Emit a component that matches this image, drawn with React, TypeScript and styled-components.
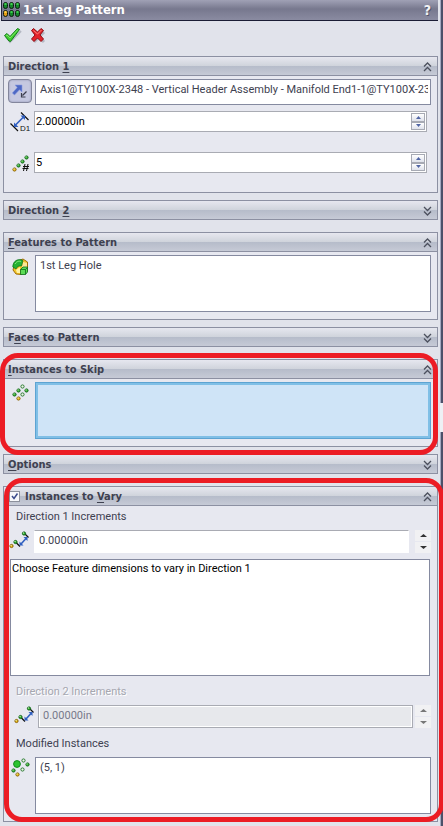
import React, { useState } from "react";
import type { ReactNode } from "react";
import styled, { createGlobalStyle, css } from "styled-components";

const GlobalStyle = createGlobalStyle`
  *, *::before, *::after { box-sizing: border-box; }
  body {
    margin: 0;
    background: #e1e3eb;
    color: #3e4150;
    font-family: Roboto, "DejaVu Sans Condensed", sans-serif;
    font-size: 11px;
    line-height: 14px;
  }
  button, input { font: inherit; color: inherit; margin: 0; }
  button { cursor: pointer; }
`;

const headingFont = css`
  font-family: "DejaVu Sans Condensed", "DejaVu Sans", Tahoma, sans-serif;
  font-weight: bold;
`;

/* ---------- layout ---------- */

const Window = styled.div`
  display: flex;
  min-height: 100vh;
  overflow: hidden;
`;

const Panel = styled.main`
  flex: 1;
  min-width: 0;
  > :last-child { margin-bottom: 4px; }
`;

const Splitter = styled.div`
  flex: none;
  width: 4px;
  display: flex;
  flex-direction: column;
  border-left: 1px solid #e1e3eb;
`;

const SplitterBar = styled.div<{ $grow: number }>`
  flex: ${(p) => p.$grow} 1 0;
  border-left: 1px solid #a4a9c0;
  background: #4c5069;
`;

const SplitterGrip = styled.div`
  height: 29px;
  background: #eef0f5;
`;

const TitleBar = styled.header`
  display: flex;
  align-items: center;
  height: 21px;
  margin: 0 1px;
  padding: 0 7px 0 1px;
  border-left: 1px solid #23263c;
  border-bottom: 1px solid #1b1d35;
  background: linear-gradient(#a0a1b5 0%, #77788e 45%, #8a8ba1 100%);
`;

const Title = styled.h1`
  flex: 1;
  margin: 0 0 0 2px;
  ${headingFont}
  font-size: 13px;
  line-height: 16px;
  color: #fff;
`;

const HelpButton = styled.button`
  padding: 0;
  border: 0;
  background: none;
  color: #f2f2f5;
  ${headingFont}
  font-size: 14px;
  line-height: 16px;
  text-shadow: 1px 1px 0 #55566b;
`;

const ActionBar = styled.div`
  display: flex;
  gap: 9px;
  height: 35px;
  padding: 6px 4px 0;
`;

const ActionButton = styled.button`
  width: 18px;
  height: 18px;
  padding: 0;
  border: 0;
  background: none;
`;

const Section = styled.section<{ $open: boolean }>`
  position: relative;
  margin: 0 1px ${(p) => (p.$open ? 7 : 12)}px 3px;
  border: 1px solid #8c90a2;
  background: #e7e8f0;
`;

const SectionHeader = styled.div<{ $open: boolean }>`
  display: flex;
  align-items: center;
  height: ${(p) => (p.$open ? 19 : 18)}px;
  border-bottom: ${(p) => (p.$open ? "1px solid #8c90a2" : "0")};
  background: linear-gradient(#e6e7ef 0%, #d0d4dc 48%, #b6bcca 52%, #c6cad6 100%);
`;

const SectionToggle = styled.button`
  flex: 1;
  display: flex;
  align-items: center;
  justify-content: space-between;
  height: 18px;
  padding: 2px 5px 0 4px;
  border: 0;
  background: none;
  ${headingFont}
  text-align: left;
`;

const Mnemonic = styled.u`
  text-underline-offset: 2px;
`;

const CheckBox = styled.span`
  display: grid;
  flex: none;
  margin: 0 1px 0 5px;
  > * { grid-area: 1 / 1; }
  > svg { display: none; place-self: center; pointer-events: none; }
  > input:checked + svg { display: block; }
`;

const HeaderCheck = styled.input`
  appearance: none;
  width: 11px;
  height: 11px;
  border: 1px solid #8c909c;
  background: #f7f8fb;
`;

const SectionBody = styled.div<{ $bottom: number }>`
  display: flex;
  flex-direction: column;
  padding: 3px 6px ${(p) => p.$bottom}px 0;
`;

const Row = styled.div<{ $icon?: number; $end?: number; $before?: number; $after?: number }>`
  display: grid;
  grid-template-columns: ${(p) => p.$icon ?? 31}px minmax(0, 1fr);
  align-items: start;
  margin: ${(p) => p.$before ?? 0}px ${(p) => p.$end ?? 0}px ${(p) => p.$after ?? 0}px 0;
`;

const IconCell = styled.span<{ $left?: number; $top?: number }>`
  display: flex;
  padding: ${(p) => p.$top ?? 3}px 0 0 ${(p) => p.$left ?? 8}px;
`;

/* ---------- fields ---------- */

const DirectionButton = styled.button`
  display: grid;
  place-items: center;
  width: 24px;
  height: 24px;
  margin-left: 4px;
  padding: 0;
  border: 1px solid #83869c;
  border-radius: 4px;
  background: #c5c8e0;
  box-shadow: inset 0 0 2px #8a8eac;
`;

const ListBox = styled.ul<{ $height: number; $active?: boolean; $tight?: boolean }>`
  height: ${(p) => p.$height}px;
  margin: 0;
  padding: ${(p) => (p.$tight ? "1px 1px 0" : "2px 2px 0 4px")};
  border: 1px solid #858aa0;
  background: #fff;
  list-style: none;
  overflow: hidden;
  white-space: nowrap;
  ${(p) => p.$tight && "color: #000;"}
  ${(p) =>
    p.$active &&
    css`
      border-color: #5da3d2;
      background: #cfe4f7;
      box-shadow: inset 0 0 0 2px #80bfe6;
    `}
`;

const ListItem = styled.li`
  overflow: hidden;
  line-height: 15px;
`;

const NumberFrame = styled.div`
  display: flex;
  height: 21px;
  padding: 1px;
  border: 1px solid #a9abb3;
  background: #fff;
  color: #000;
`;

const BareInput = styled.input`
  flex: 1;
  min-width: 0;
  padding: 0;
  border: 0;
  background: none;
  outline: 0;
`;

const Spinner = styled.span`
  display: grid;
  grid-template-rows: 1fr 1fr;
  width: 14px;
`;

const SpinButton = styled.button`
  display: grid;
  place-items: center;
  min-height: 0;
  padding: 0;
  border: 1px solid #a7aab4;
  background: linear-gradient(#fff, #dfe2ec);
  color: #5065a5;
`;

const VaryRow = styled.div<{ $icon: number; $after: number; $gap: number }>`
  display: grid;
  grid-template-columns: ${(p) => p.$icon}px minmax(0, 1fr) 16px;
  margin: 6px 0 ${(p) => p.$after}px;
  > input { margin-right: ${(p) => p.$gap}px; }
`;

const VaryInput = styled.input`
  min-width: 0;
  height: 23px;
  padding: 0 4px 2px;
  border: 1px solid #fff;
  border-top-color: #a9abb3;
  background: #fff;
  outline: 0;
  &:disabled {
    border: 1px solid #a9abb3;
    box-shadow: inset 0 0 0 1px #fff;
    background: #e7e8ec;
    color: #77798a;
  }
`;

const FlatSpinner = styled.span<{ $dim?: boolean }>`
  display: grid;
  grid-template-rows: 1fr 1fr;
  gap: 1px;
  height: 23px;
  color: ${(p) => (p.$dim ? "#777" : "#333")};
`;

const FlatSpin = styled.button`
  display: grid;
  place-items: center;
  min-height: 0;
  padding: 0;
  border: 0;
  background: #f1f1f3;
`;

const FieldLabel = styled.label<{ $disabled?: boolean }>`
  display: block;
  padding: 1px 0 0 12px;
  ${(p) => p.$disabled && "color: #a6a7b0; text-shadow: 1px 1px 0 #fff;"}
`;

const IndentedList = styled.div`
  margin: 0 1px 8px 0;
  padding-left: 6px;
`;

const Outline = styled.div<{ $inset: string }>`
  position: absolute;
  inset: ${(p) => p.$inset};
  z-index: 2;
  border: 5px solid #ec1c24;
  border-radius: 18px;
  pointer-events: none;
`;

/* ---------- icons ---------- */

const Dot = ({ x, y, kind = "green" }: { x: number; y: number; kind?: "green" | "gold" | "hollow" }) => {
  const fill = { green: "#35b52f", gold: "#f2c21c", hollow: "#eef5ea" }[kind];
  const edge = { green: "#12661a", gold: "#8a6206", hollow: "#2b7a30" }[kind];
  return (
    <g>
      <circle cx={x} cy={y} r={1.6} fill={fill} stroke={edge} />
      {kind !== "hollow" && <rect x={x - 1} y={y - 1} width={1} height={1} fill="#d9f7c9" />}
    </g>
  );
};

const PatternIcon = () => (
  <svg width="18" height="17" viewBox="0 0 18 17" aria-hidden="true">
    {[0, 6, 12].map((x) =>
      [0, 8].map((y) => {
        const gold = x === 0 && y === 8;
        return (
          <g key={`${x}-${y}`}>
            <rect x={x + 0.5} y={y + 0.5} width="4" height="6" rx="2" fill={gold ? "#e39a14" : "#14842a"} stroke="#0b1c0e" />
            <rect x={x + 1.5} y={y + 1} width="2" height="2" fill={gold ? "#ffd24a" : "#3ccf4c"} />
          </g>
        );
      }),
    )}
  </svg>
);

const CheckIcon = () => (
  <svg width="18" height="18" viewBox="0 0 18 18" aria-hidden="true">
    <path d="M2 10 L6 15 L17 4" fill="none" stroke="#b4b8c3" strokeWidth="2" />
    <path d="M0.5 8.5 L3 6.5 L6 9.5 L13.5 1.5 L15.5 2.5 L6.5 14.5 L5 14 Z" fill="#3fd02f" stroke="#117a18" />
    <path d="M2 8.5 L3 8 L6 11 L13.5 3" fill="none" stroke="#7fe468" />
  </svg>
);

const CrossIcon = () => (
  <svg width="18" height="18" viewBox="0 0 18 18" aria-hidden="true">
    <path d="M3 5 L13 15 M13 5 L3 15" stroke="#b4b8c3" strokeWidth="3" />
    <path
      d="M0.5 3.5 L2.5 1.5 L6.5 5 L10 1.5 L12.5 3.5 L9 8 L12.5 12 L10 14.5 L6.5 11 L3 14.5 L0.5 12 L4 8 Z"
      fill="#e3222a"
      stroke="#8f0d14"
    />
    <path d="M2.5 3.5 L6.5 7 L10.5 3" fill="none" stroke="#ff8078" />
  </svg>
);

const ReverseIcon = () => (
  <svg width="18" height="18" viewBox="0 0 18 18" aria-hidden="true">
    <path d="M4 3 H11 V10 L8.5 7.8 L3.5 13 L1.3 11 L6.2 5.5 Z" fill="#4d68c4" stroke="#8c9ce0" strokeWidth="0.6" />
    <path d="M15.5 9.5 L11.5 13.5 M10.5 11 V15 H14.5" fill="none" stroke="#3a3d4c" strokeWidth="1.2" />
  </svg>
);

const SpacingIcon = () => (
  <svg width="21" height="20" viewBox="0 0 21 20" aria-hidden="true">
    <path d="M0.5 11.5 L8 19 M11 0.5 L18.5 8" stroke="#111" strokeWidth="1.2" />
    <path d="M5 13.5 L14 4.5" stroke="#2f5ec0" strokeWidth="1.6" />
    <path d="M4 15 V10.5 L8.5 15 Z M15 3.5 H10.5 L15 8 Z" fill="#2f5ec0" />
    <text x="10" y="19" fontSize="8" fontFamily="Liberation Sans, sans-serif" fill="#111">
      D1
    </text>
  </svg>
);

const CountIcon = () => (
  <svg width="18" height="18" viewBox="0 0 18 18" aria-hidden="true">
    <Dot x={2.5} y={15.5} kind="gold" />
    <Dot x={6.5} y={11.5} />
    <Dot x={10.5} y={7.5} />
    <Dot x={14.5} y={3.5} />
    <path d="M13 10 L11.5 17 M16 10 L14.5 17 M11 12.5 H17 M10.5 14.5 H16.5" stroke="#111" />
  </svg>
);

const FeatureIcon = () => (
  <svg width="17" height="18" viewBox="0 0 17 18" aria-hidden="true">
    <path d="M3 4 L11 1 L15.5 4 V13 L9 16.5 L4 16 L1 12 Z" fill="#f4c628" stroke="#a06c08" />
    <path d="M11 4 L15 5 V9 H10 Z" fill="#fbe796" />
    <path d="M0.8 9 C0.8 3 6 0 11 2.5 L9.5 8 C7 7.5 5 8.5 4 11 Z" fill="#25b233" stroke="#0c6d1b" strokeWidth="0.7" />
    <path d="M3 6 C5 3 7 3 9 3.5" stroke="#8bea83" fill="none" />
    <path d="M4 12 L8 9 V15 L5 15 Z" fill="#fff1a5" />
    <path d="M8.5 11.5 L11 9 H15.5 V14 L13.5 16.5 H8.5 Z" fill="#5bdc55" stroke="#0c6d1b" strokeWidth="0.8" />
    <path d="M8.5 11.5 H13.5 V16.5 M13.5 11.5 L15.5 9.5" stroke="#0c6d1b" strokeWidth="0.8" fill="none" />
  </svg>
);

const SkipIcon = () => (
  <svg width="17" height="17" viewBox="0 0 17 17" aria-hidden="true">
    <Dot x={10.5} y={2.5} kind="hollow" />
    <Dot x={6.5} y={6.5} />
    <Dot x={14.5} y={6.5} />
    <Dot x={2.5} y={10.5} />
    <Dot x={10.5} y={10.5} kind="hollow" />
    <Dot x={6.5} y={14.5} kind="gold" />
  </svg>
);

const IncrementIcon = () => (
  <svg width="21" height="18" viewBox="0 0 21 18" aria-hidden="true">
    <path d="M7 11.5 L11 15.5 M15 2 L19.5 6.5" stroke="#111" strokeWidth="1.3" />
    <path d="M12 13 L17 7.5" stroke="#2f5ec0" strokeWidth="1.6" />
    <path d="M10.5 14.5 V10.5 L14.5 14.5 Z M18.5 6 H14.5 L18.5 10 Z" fill="#2f5ec0" />
    <Dot x={2.5} y={15} kind="gold" />
    <Dot x={6.5} y={11} />
    <Dot x={15} y={2.5} />
  </svg>
);

const ModifiedIcon = () => (
  <svg width="19" height="19" viewBox="0 0 19 19" aria-hidden="true">
    <circle cx="6" cy="6" r="3.4" fill="#2bc42f" stroke="#148a1d" />
    <Dot x={12.5} y={2.5} kind="hollow" />
    <Dot x={16.5} y={6.5} />
    <Dot x={2.5} y={12.5} />
    <Dot x={11.5} y={11.5} kind="hollow" />
    <Dot x={6.5} y={16.5} kind="gold" />
  </svg>
);

const Chevrons = ({ up }: { up: boolean }) => (
  <svg width="9" height="10" viewBox="0 0 9 10" aria-hidden="true">
    <path
      d={up ? "M1 4.5 L4.5 1 L8 4.5 M1 9 L4.5 5.5 L8 9" : "M1 1 L4.5 4.5 L8 1 M1 5.5 L4.5 9 L8 5.5"}
      fill="none"
      stroke="#4c505e"
      strokeWidth="1.3"
    />
  </svg>
);

const Triangle = ({ up, width = 5 }: { up: boolean; width?: number }) => (
  <svg width={width} height="3" viewBox="0 0 6 3" preserveAspectRatio="none" aria-hidden="true">
    <path d={up ? "M0 3 L3 0 L6 3 Z" : "M0 0 L3 3 L6 0 Z"} fill="currentColor" />
  </svg>
);

/* ---------- parts ---------- */

type GroupProps = {
  title: ReactNode;
  open?: boolean;
  bottom?: number;
  lead?: ReactNode;
  outline?: string;
  children?: ReactNode;
};

const Group = ({ title, open = false, bottom = 7, lead, outline, children }: GroupProps) => {
  const [shown, setShown] = useState(open);
  return (
    <Section $open={shown}>
      <SectionHeader $open={shown}>
        {lead}
        <SectionToggle aria-expanded={shown} onClick={() => setShown(!shown)}>
          <span>{title}</span>
          <Chevrons up={shown} />
        </SectionToggle>
      </SectionHeader>
      {shown && <SectionBody $bottom={bottom}>{children}</SectionBody>}
      {outline && <Outline $inset={outline} />}
    </Section>
  );
};

const NumberField = ({ label, value }: { label: string; value: string }) => (
  <NumberFrame>
    <BareInput aria-label={label} defaultValue={value} />
    <Spinner>
      <SpinButton aria-label={`Increase ${label}`}>
        <Triangle up />
      </SpinButton>
      <SpinButton aria-label={`Decrease ${label}`}>
        <Triangle up={false} />
      </SpinButton>
    </Spinner>
  </NumberFrame>
);

const FlatSpinButtons = ({ label, disabled }: { label: string; disabled?: boolean }) => (
  <FlatSpinner $dim={disabled}>
    <FlatSpin aria-label={`Increase ${label}`} disabled={disabled}>
      <Triangle up width={7} />
    </FlatSpin>
    <FlatSpin aria-label={`Decrease ${label}`} disabled={disabled}>
      <Triangle up={false} width={7} />
    </FlatSpin>
  </FlatSpinner>
);

export default function App() {
  return (
    <>
      <GlobalStyle />
      <Window>
        <Panel>
          <TitleBar>
            <PatternIcon />
            <Title>1st Leg Pattern</Title>
            <HelpButton aria-label="Help">?</HelpButton>
          </TitleBar>
          <ActionBar>
            <ActionButton aria-label="OK">
              <CheckIcon />
            </ActionButton>
            <ActionButton aria-label="Cancel">
              <CrossIcon />
            </ActionButton>
          </ActionBar>

          <Group open bottom={19} title={<>Direction <Mnemonic>1</Mnemonic></>}>
            <Row $after={6}>
              <DirectionButton aria-label="Reverse direction">
                <ReverseIcon />
              </DirectionButton>
              <ListBox $height={26} aria-label="Pattern direction">
                <ListItem>Axis1@TY100X-2348 - Vertical Header Assembly - Manifold End1-1@TY100X-2348</ListItem>
              </ListBox>
            </Row>
            <Row $icon={30} $end={4} $after={20}>
              <IconCell $left={6} $top={1}>
                <SpacingIcon />
              </IconCell>
              <NumberField label="Spacing" value="2.00000in" />
            </Row>
            <Row $icon={30} $end={4}>
              <IconCell $top={2}>
                <CountIcon />
              </IconCell>
              <NumberField label="Number of instances" value="5" />
            </Row>
          </Group>

          <Group title={<>Direction <Mnemonic>2</Mnemonic></>} />

          <Group open title={<><Mnemonic>F</Mnemonic>eatures to Pattern</>}>
            <Row>
              <IconCell>
                <FeatureIcon />
              </IconCell>
              <ListBox $height={57} aria-label="Features to Pattern">
                <ListItem>1st Leg Hole</ListItem>
              </ListBox>
            </Row>
          </Group>

          <Group title={<>F<Mnemonic>a</Mnemonic>ces to Pattern</>} />

          <Group open outline="-7px -1px -9px -4px" title={<><Mnemonic>I</Mnemonic>nstances to Skip</>}>
            <Row>
              <IconCell $top={2}>
                <SkipIcon />
              </IconCell>
              <ListBox $height={57} $active aria-label="Instances to Skip" />
            </Row>
          </Group>

          <Group title={<><Mnemonic>O</Mnemonic>ptions</>} />

          <Group
            open
            outline="-9px -7px -1px 0"
            title={<>Instances to <Mnemonic>V</Mnemonic>ary</>}
            lead={
              <CheckBox>
                <HeaderCheck type="checkbox" defaultChecked aria-label="Instances to Vary" />
                <svg width="9" height="9" viewBox="0 0 9 9" aria-hidden="true">
                  <path d="M2 4 L4 6.5 L7.5 1.5" fill="none" stroke="#3b4c8c" strokeWidth="1.5" />
                </svg>
              </CheckBox>
            }
          >
            <FieldLabel htmlFor="increment-1">Direction 1 Increments</FieldLabel>
            <VaryRow $icon={30} $after={6} $gap={6}>
              <IconCell $left={5} $top={1}>
                <IncrementIcon />
              </IconCell>
              <VaryInput id="increment-1" defaultValue="0.00000in" />
              <FlatSpinButtons label="Direction 1 increment" />
            </VaryRow>
            <IndentedList>
              <ListBox $height={117} $tight aria-label="Direction 1 dimensions">
                <ListItem>Choose Feature dimensions to vary in Direction 1</ListItem>
              </ListBox>
            </IndentedList>
            <FieldLabel htmlFor="increment-2" $disabled>
              Direction 2 Increments
            </FieldLabel>
            <VaryRow $icon={34} $after={8} $gap={2}>
              <IconCell $left={10} $top={1}>
                <IncrementIcon />
              </IconCell>
              <VaryInput id="increment-2" defaultValue="0.00000in" disabled />
              <FlatSpinButtons label="Direction 2 increment" disabled />
            </VaryRow>
            <FieldLabel as="span" id="modified-label">
              Modified Instances
            </FieldLabel>
            <Row $before={6}>
              <IconCell $left={7} $top={1}>
                <ModifiedIcon />
              </IconCell>
              <ListBox $height={57} aria-labelledby="modified-label">
                <ListItem>(5, 1)</ListItem>
              </ListBox>
            </Row>
          </Group>
        </Panel>
        <Splitter>
          <SplitterBar $grow={403} />
          <SplitterGrip />
          <SplitterBar $grow={394} />
        </Splitter>
      </Window>
    </>
  );
}
